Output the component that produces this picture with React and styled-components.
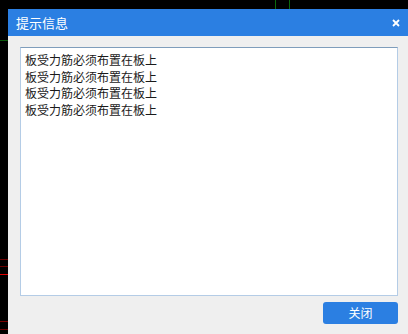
import React from 'react'
import styled, { createGlobalStyle } from 'styled-components'

const GlobalStyle = createGlobalStyle`
  html, body {
    margin: 0;
    padding: 0;
    background: #000;
    overflow: hidden;
  }
  body {
    font-family: "Noto Sans CJK SC", "Noto Sans", sans-serif;
  }
`

const Page = styled.div`
  position: relative;
  width: 408px;
  height: 334px;
  padding: 9px 0 0 8px;
  box-sizing: border-box;
`

const Canvas = styled.svg`
  position: absolute;
  left: 0;
  top: 0;
`

const Dialog = styled.div`
  position: relative;
  width: 400px;
  height: 325px;
  background: #efefef;
  display: flex;
  flex-direction: column;
`

const TitleBar = styled.div`
  height: 27px;
  background: #2b7fe2;
  display: flex;
  align-items: center;
  justify-content: space-between;
  padding: 0 8px 0 8px;
  color: #fff;
`

const Title = styled.span`
  font-size: 13px;
  line-height: 27px;
  margin-top: -1px;
`

const CloseIcon = styled.svg`
  display: block;
`

const Body = styled.div`
  flex: 1;
  display: flex;
  flex-direction: column;
  padding: 11px 10px 10px 12px;
`

const MessageBox = styled.div`
  width: 378px;
  height: 249px;
  box-sizing: border-box;
  background: #fff;
  border: 1px solid #b4cce6;
  border-top-color: #7f9dbb;
  padding: 4px 4px;
  font-size: 12px;
  line-height: 16.7px;
  color: #1a1a1a;
`

const Line = styled.div`
  white-space: nowrap;
`

const Footer = styled.div`
  display: flex;
  justify-content: flex-end;
  margin-top: 6px;
`

const Button = styled.button`
  width: 75px;
  height: 22px;
  border: none;
  border-radius: 3px;
  background: #2b7fe2;
  color: #fff;
  font-family: inherit;
  font-size: 12px;
  line-height: 22px;
  padding: 0;
  cursor: pointer;
`

const messages = Array(4).fill('板受力筋必须布置在板上')

const App = () => (
  <Page>
    <GlobalStyle />
    <Canvas width="408" height="334">
      <line x1="275.5" y1="0" x2="275.5" y2="9" stroke="#0b6a0b" />
      <line x1="289.5" y1="0" x2="289.5" y2="9" stroke="#0b6a0b" />
      <line x1="0" y1="40.5" x2="8" y2="40.5" stroke="#0b5a0b" />
      <line x1="0" y1="259.5" x2="8" y2="259.5" stroke="#6a0000" />
      <line x1="0" y1="266.5" x2="8" y2="266.5" stroke="#6a0000" />
      <line x1="0" y1="274.5" x2="8" y2="274.5" stroke="#e00000" />
      <line x1="0" y1="321.5" x2="8" y2="321.5" stroke="#7a0000" />
      <line x1="0" y1="329.5" x2="8" y2="329.5" stroke="#6a0000" />
    </Canvas>
    <Dialog>
      <TitleBar>
        <Title>提示信息</Title>
        <CloseIcon width="8" height="8" viewBox="0 0 8 8">
          <path d="M1 1 L7 7 M7 1 L1 7" stroke="#fff" strokeWidth="1.8" />
        </CloseIcon>
      </TitleBar>
      <Body>
        <MessageBox>
          {messages.map((m, i) => (
            <Line key={i}>{m}</Line>
          ))}
        </MessageBox>
        <Footer>
          <Button>关闭</Button>
        </Footer>
      </Body>
    </Dialog>
  </Page>
)

export default App
